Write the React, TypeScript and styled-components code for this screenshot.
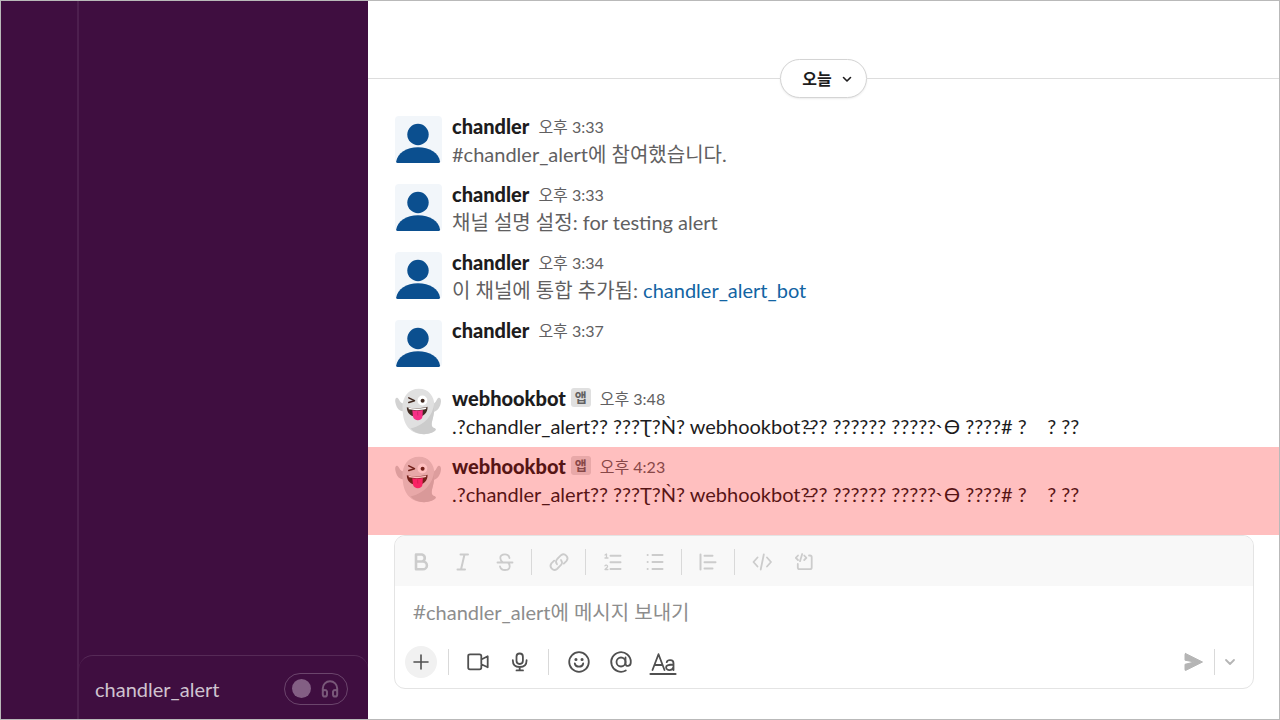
import React from "react";
import styled, { createGlobalStyle } from "styled-components";

const GlobalStyle = createGlobalStyle`
  *, *::before, *::after { box-sizing: border-box; }
  body {
    margin: 0;
    background: #fff;
    color: #1d1c1d;
    font-family: Lato, "Noto Sans CJK KR", sans-serif;
    font-size: 20px;
    line-height: 28px;
  }
  button, input { font: inherit; }
`;

const Window = styled.div`
  display: flex;
  min-height: 100vh;
  border: 1px solid #b9b9b9;
`;

const Rail = styled.nav`
  flex: 0 0 76px;
  background: #3f0e40;
`;

const Sidebar = styled.aside`
  flex: 0 0 291px;
  display: flex;
  flex-direction: column;
  justify-content: flex-end;
  background: #3f0e40;
  border-left: 2px solid #4d1f4e;
`;

const Huddle = styled.footer`
  display: flex;
  align-items: center;
  justify-content: space-between;
  height: 64px;
  padding: 2px 20px 0 16px;
  border-top: 1px solid #562a57;
  border-radius: 14px 14px 0 0;
  color: #cfc3cf;
`;

const HuddleToggle = styled.button`
  display: flex;
  align-items: center;
  gap: 10px;
  width: 64px;
  height: 32px;
  padding: 0 7px;
  border: 1px solid #6b456c;
  border-radius: 16px;
  background: none;
  color: #795879;
`;

const Knob = styled.span`
  width: 19px;
  height: 19px;
  border-radius: 50%;
  background: #835f84;
`;

const Main = styled.main`
  flex: 1;
  min-width: 0;
  display: flex;
  flex-direction: column;
  background: #fff;
`;

const DateDivider = styled.div`
  display: flex;
  align-items: center;
  margin: 58px 0 9px;
  &::before, &::after {
    content: "";
    flex: 1;
    height: 1px;
    background: #dddddd;
  }
`;

const DateButton = styled.button`
  display: flex;
  align-items: center;
  gap: 9px;
  height: 39px;
  padding: 0 13px 0 21px;
  border: 1px solid #d4d4d4;
  border-radius: 20px;
  background: #fff;
  box-shadow: 0 1px 2px rgba(0, 0, 0, 0.08);
  color: #1d1c1d;
  font-size: 16px;
  font-weight: 700;
`;

const Messages = styled.ol`
  flex: 1;
  margin: 0;
  padding: 0;
  list-style: none;
`;

const Row = styled.li<{ $alert?: boolean }>`
  position: relative;
  display: flex;
  gap: 10px;
  min-height: ${(p) => (p.$alert ? 88 : 68)}px;
  padding: 9px 26px 0 27px;
  &::after {
    content: "";
    display: ${(p) => (p.$alert ? "block" : "none")};
    position: absolute;
    inset: 0;
    background: rgba(255, 0, 0, 0.25);
    pointer-events: none;
  }
`;

const Avatar = styled.svg`
  flex: none;
  width: 47px;
  height: 47px;
`;

const Body = styled.div`
  min-width: 0;
  margin-top: -5px;
`;

const Meta = styled.div`
  display: flex;
  align-items: center;
  height: 29px;
`;

const Author = styled.strong`
  font-weight: 900;
`;

const AppBadge = styled.span`
  margin-left: 5px;
  padding: 0 4px;
  border-radius: 3px;
  background: #e0e0e0;
  color: #616061;
  font-size: 13px;
  line-height: 19px;
  font-weight: 700;
`;

const Time = styled.time`
  margin: 2px 0 0 9px;
  color: #616061;
  font-size: 16px;
`;

const Text = styled.p<{ $system?: boolean }>`
  margin: 0;
  white-space: pre-wrap;
  color: ${(p) => (p.$system ? "#616061" : "#1d1c1d")};
`;

const Link = styled.a`
  color: #1264a3;
  text-decoration: none;
`;

const Composer = styled.form`
  margin: 0 25px 30px 26px;
  border: 1px solid #e4e4e4;
  border-radius: 11px;
  overflow: hidden;
`;

const Toolbar = styled.div`
  display: flex;
  align-items: center;
  height: 50px;
  padding: 2px 12px 0;
  background: #f8f8f8;
  color: #cccccc;
`;

const Group = styled.div`
  display: flex;
  gap: 14px;
`;

const Divider = styled.span<{ $left?: number; $right?: number }>`
  width: 1px;
  height: 26px;
  margin: 0 ${(p) => p.$right ?? 13}px 0 ${(p) => p.$left ?? 12}px;
  background: #d9d9d9;
`;

const IconButton = styled.button`
  display: flex;
  align-items: center;
  justify-content: center;
  width: 28px;
  height: 28px;
  padding: 0;
  border: 0;
  background: none;
  color: inherit;
`;

const RoundButton = styled(IconButton)`
  width: 32px;
  height: 32px;
  border-radius: 50%;
  background: #f1f1f1;
`;

const Field = styled.label`
  display: flex;
  align-items: center;
  height: 52px;
  padding: 0 18px;
  color: #8d8d8d;
`;

const Hash = styled.span`
  font-family: "Noto Sans", "Noto Sans CJK KR", sans-serif;
  width: 13px;
`;

const Input = styled.input`
  flex: 1;
  min-width: 0;
  padding: 0;
  border: 0;
  outline: 0;
  background: none;
  color: #1d1c1d;
  &::placeholder { color: #8d8d8d; opacity: 1; }
`;

const Actions = styled.div`
  display: flex;
  align-items: center;
  height: 50px;
  padding: 0 9px 2px 10px;
  color: #505050;
`;

const Trailing = styled.div`
  display: flex;
  align-items: center;
  margin-left: auto;
  color: #b5b5b5;
`;

const Glyph = ({ size = 28, width = 2, children }: { size?: number; width?: number; children: React.ReactNode }) => (
  <svg width={size} height={size} viewBox={`0 0 ${size} ${size}`} fill="none" stroke="currentColor"
    strokeWidth={width} strokeLinecap="round" strokeLinejoin="round" aria-hidden="true">
    {children}
  </svg>
);

const PersonAvatar = () => (
  <Avatar viewBox="0 0 47 47" aria-hidden="true">
    <rect width="47" height="47" rx="4" fill="#f2f6fa" />
    <circle cx="23" cy="18.5" r="10.7" fill="#0b4f8f" />
    <path d="M1.2 45.5C2.5 37 11.5 31.2 23 31.2S44 37 45 45.5Q45 47 43.5 47H2.5Q1.2 47 1.2 45.5Z" fill="#0b4f8f" />
  </Avatar>
);

const GhostAvatar = () => (
  <Avatar viewBox="0 0 47 47" aria-hidden="true">
    <path d="M9 23C4 24 1 19 .2 13.5C0 10.5 1.2 9 2.7 10C4.7 11.5 4.5 15 9 15.5ZM37.500 24C42.500 23.5 45.5 19 46 13.5C46.2 10.5 44.6 9 43.1 10C41.1 11.5 41.6 15 37.5 16Z" fill="#d2d2d2" />
    <path d="M24 .8C13.500 .8 7.500 8.5 7.500 19.5C7.500 32 11.500 46.2 29 46.2C34.500 46.2 40 44 40.800 41.5C41.100 40 37.500 40.500 36.800 37.5C36.200 34 39.500 27.5 39.500 18.5C39.500 8 33.500 .8 24 .8Z" fill="#e0e0e0" />
    <path d="M39.400 15C37.500 28 30 37 15.500 40.500C19 44.500 23.500 46.2 29 46.2C34.500 46.2 40 44 40.800 41.5C41.100 40 37.500 40.5 36.800 37.5C36.200 34 39.500 27.5 39.500 18.5Q39.500 16.500 39.400 15Z" fill="#cccccc" />
    <circle cx="27.4" cy="12.5" r="4.900" fill="#fff" />
    <circle cx="27.6" cy="12.7" r="2" fill="#422b22" />
    <path d="M13.8 9.800L19.500 12.700L13.800 14.500" fill="none" stroke="#422b22" strokeWidth="1.5" strokeLinecap="round" strokeLinejoin="round" />
    <path d="M11.800 19.2C17.500 20.800 27 20.600 32.500 18.8C33 24.500 28.500 29 22.500 29C16 29 11.800 25 11.800 19.2Z" fill="#422b22" />
    <path d="M13.500 19.8C19 21 27 20.7 31.400 19.400L31 21C26 22.400 19 22.500 13.800 21.300Z" fill="#fff" />
    <path d="M17.300 22.300Q22 23 27.800 22L27.500 28.500C27 33.500 19 33.500 18 28.800Z" fill="#f72f86" />
    <path d="M22.600 23.500L22.800 27.500" stroke="#d4226f" strokeWidth="1" />
  </Avatar>
);

const garbled = ".?chandler_alert?? ???\u01AE?\u01F8? webhookbot?\u0336?? ?????? ?????\u02F4\u04E8 ????# ?    ? ??";

type Message = { author: string; time: string; bot?: boolean; alert?: boolean; text?: React.ReactNode };

const messages: Message[] = [
  { author: "chandler", time: "3:33", text: "#chandler_alert에 참여했습니다." },
  { author: "chandler", time: "3:33", text: "채널 설명 설정: for testing alert" },
  { author: "chandler", time: "3:34", text: <>이 채널에 통합 추가됨: <Link href="#bot">chandler_alert_bot</Link></> },
  { author: "chandler", time: "3:37" },
  { author: "webhookbot", time: "3:48", bot: true, text: garbled },
  { author: "webhookbot", time: "4:23", bot: true, alert: true, text: garbled },
];

export default function App() {
  return (
    <Window>
      <GlobalStyle />
      <Rail aria-label="워크스페이스" />
      <Sidebar>
        <Huddle>
          <span>chandler_alert</span>
          <HuddleToggle type="button" aria-label="허들">
            <Knob />
            <Glyph size={18}>
              <path d="M1.8 11V8.5A7.2 7.2 0 0 1 16.2 8.5V11M1.8 11.5A2.2 2.2 0 0 1 6 11.5V14.5A2.1 2.1 0 0 1 1.8 14.5ZM12 11.5A2.2 2.2 0 0 1 16.2 11.5V14.5A2.1 2.1 0 0 1 12 14.5Z" />
            </Glyph>
          </HuddleToggle>
        </Huddle>
      </Sidebar>
      <Main>
        <DateDivider>
          <DateButton type="button">
            오늘
            <Glyph size={12} width={1.6}><path d="M2.5 4.5L6 8L9.5 4.5" /></Glyph>
          </DateButton>
        </DateDivider>
        <Messages>
          {messages.map((m, i) => (
            <Row key={i} $alert={m.alert}>
              {m.bot ? <GhostAvatar /> : <PersonAvatar />}
              <Body>
                <Meta>
                  <Author>{m.author}</Author>
                  {m.bot && <AppBadge>앱</AppBadge>}
                  <Time>오후 {m.time}</Time>
                </Meta>
                {m.text && <Text $system={!m.bot}>{m.text}</Text>}
              </Body>
            </Row>
          ))}
        </Messages>
        <Composer>
          <Toolbar>
            <Group>
              <IconButton type="button" aria-label="굵게">
                <Glyph width={2.6}><path d="M9 6.5H15A3.6 3.6 0 0 1 15 13.5H9ZM9 13.5H16A3.9 3.9 0 0 1 16 21.3H9Z" /></Glyph>
              </IconButton>
              <IconButton type="button" aria-label="기울임꼴">
                <Glyph><path d="M11.5 6.5H19M8.5 21.5H16M15.5 6.5L12 21.5" /></Glyph>
              </IconButton>
              <IconButton type="button" aria-label="취소선">
                <Glyph width={1.8}><path d="M6.5 14.5H21.5M18.5 10C18 7.5 16.5 6.3 14 6.3C11.3 6.3 9.3 7.7 9.3 10C9.3 12.2 10.5 13.5 12 14.5M17 14.5C18.2 15.5 18.7 16.8 18.7 18.5C18.7 20.7 16.8 22 14 22C11.2 22 9.5 20.7 9 18.5" /></Glyph>
              </IconButton>
            </Group>
            <Divider />
            <IconButton type="button" aria-label="링크">
              <Glyph width={1.8}><path d="M12 16.2A4 4 0 0 1 12.2 11L16 7.2A4 4 0 0 1 21.6 12.8L18.8 15.6M16 12A4 4 0 0 1 15.8 17.2L12 21A4 4 0 0 1 6.4 15.4L9.2 12.6" /></Glyph>
            </IconButton>
            <Divider />
            <Group>
              <IconButton type="button" aria-label="순서가 지정된 목록">
                <Glyph><path d="M11.5 7.7H21.5M11.5 14.3H21.5M11.5 20.9H21.5" /><path strokeWidth="1.3" d="M6 7L7.5 6V10M6 10H9M6 17.8C6.5 16.8 8.7 17 8.6 18.5C8.5 19.5 7 20.3 6 21.5H8.9" /></Glyph>
              </IconButton>
              <IconButton type="button" aria-label="글머리 기호 목록">
                <Glyph><path d="M11.5 7H21.5M11.5 14H21.5M11.5 21H21.5M6.6 7H6.7M6.6 14H6.7M6.6 21H6.7" /></Glyph>
              </IconButton>
            </Group>
            <Divider $right={12} />
            <IconButton type="button" aria-label="인용구">
              <Glyph><path d="M6.5 6.5V21.5M10.5 7.8H18.5M10.5 14.3H21.5M10.5 20.5H18.5" /></Glyph>
            </IconButton>
            <Divider />
            <Group>
              <IconButton type="button" aria-label="코드">
                <Glyph width={1.8}><path d="M9.5 9.5L5.5 14L9.5 18.5M19 9.5L23 14L19 18.5M15.8 6.5L12.7 21.5" /></Glyph>
              </IconButton>
              <IconButton type="button" aria-label="코드 블록">
                <Glyph width={1.8}><path d="M8 7.5L5.8 9.8L8 12M14.2 7.5L16.4 9.8L14.2 12M12.2 6L10 13.2M19 7.5H20Q21.7 7.5 21.7 9.2V19.5Q21.7 21.2 20 21.2H9.5Q7.8 21.2 7.8 19.5V16" /></Glyph>
              </IconButton>
            </Group>
          </Toolbar>
          <Field>
            <Hash>#</Hash>
            <Input type="text" placeholder="chandler_alert에 메시지 보내기" />
          </Field>
          <Actions>
            <RoundButton type="button" aria-label="첨부">
              <Glyph width={1.6}><path d="M14 7V21M7 14H21" /></Glyph>
            </RoundButton>
            <Divider $left={11} $right={15} />
            <Group>
              <IconButton type="button" aria-label="비디오 클립">
                <Glyph width={1.8}><path d="M6 6.3H15.5Q17.3 6.3 17.3 8V19.5Q17.3 21.3 15.5 21.3H6Q4.2 21.3 4.2 19.5V8Q4.2 6.3 6 6.3ZM17.3 11.5L23.7 8.3V19.3L17.3 16.2" /></Glyph>
              </IconButton>
              <IconButton type="button" aria-label="오디오 클립">
                <Glyph width={1.8}><path d="M13.7 5.5A3.2 3.2 0 0 1 16.9 8.7V12.8A3.2 3.2 0 0 1 10.5 12.8V8.7A3.2 3.2 0 0 1 13.7 5.5ZM6.8 12.2C6.8 16.5 9.5 19 13.7 19S20.6 16.5 20.6 12.2M13.7 19V22.2M10.5 22.4H17" /></Glyph>
              </IconButton>
            </Group>
            <Divider $left={14} $right={16} />
            <Group>
              <IconButton type="button" aria-label="이모티콘">
                <Glyph width={1.8}><circle cx="14" cy="14" r="9.8" /><path d="M9.8 15.5C10.5 19.7 17.5 19.7 18.2 15.5" /><path strokeWidth="3" d="M10.9 11.5H11M17 11.5H17.1" /></Glyph>
              </IconButton>
              <IconButton type="button" aria-label="멘션">
                <Glyph width={1.8}><circle cx="14" cy="14" r="4.5" /><path d="M18.5 9.5V15.5C18.5 19 23.8 19 23.8 14A9.8 9.8 0 1 0 18.8 22.5" /></Glyph>
              </IconButton>
              <IconButton type="button" aria-label="서식 숨기기">
                <Glyph width={1.8}><path d="M3.5 22L9.5 6.2L15.5 22M5.5 17H13.5M17.7 14.2C18.5 11.5 24.5 11.3 24.5 15.2V22M24.5 16.5C20.5 16.5 17.1 16.8 17.1 19.3C17.1 23 23.5 23 24.5 19" /><path strokeWidth="2.2" d="M1.5 26H26.5" /></Glyph>
              </IconButton>
            </Group>
            <Trailing>
              <IconButton type="submit" aria-label="보내기">
                <Glyph>
                  <path fill="currentColor" strokeWidth="1" d="M5.5 5.5L22.5 14L5.5 22.5Q5 22.5 5 21.5V16.3L14.5 14L5 12.2V6.5Q5 5.5 5.5 5.5Z" />
                </Glyph>
              </IconButton>
              <Divider $left={6} $right={1} />
              <IconButton type="button" aria-label="예약 옵션">
                <Glyph width={1.8}><path d="M10 12L14 16L18 12" /></Glyph>
              </IconButton>
            </Trailing>
          </Actions>
        </Composer>
      </Main>
    </Window>
  );
}
